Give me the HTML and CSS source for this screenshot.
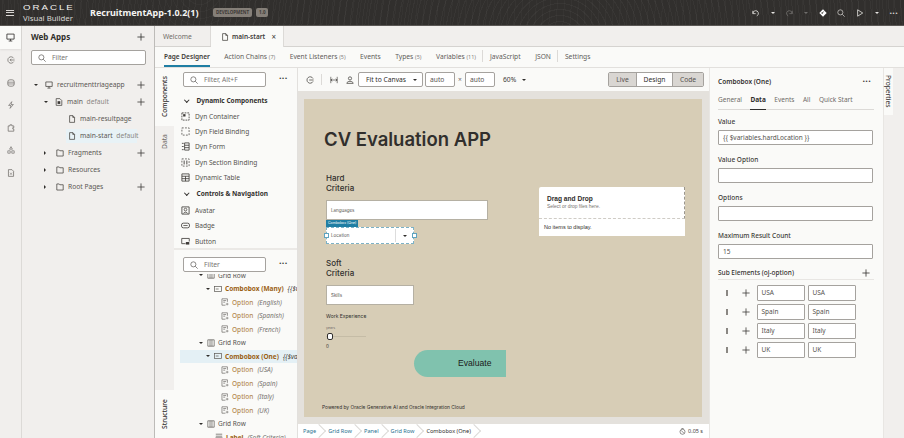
FILE: index.html
```html
<!DOCTYPE html>
<html lang="en">
<head>
	<link rel="stylesheet" href="styles.css">
	<meta charset="UTF-8">
	<title>RecruitmentApp - Visual Builder</title>
</head>
<body>

<svg class="iconDefs" width="0" height="0">
	<symbol id="i-plus" viewBox="0 0 10 10"><path d="M5 .5v9M.5 5h9" fill="none" stroke="currentColor" stroke-width="1"/></symbol>
	<symbol id="i-search" viewBox="0 0 10 10"><circle cx="4.2" cy="4.2" r="3.2" fill="none" stroke="currentColor" stroke-width=".8"/><path d="M6.6 6.6l3 3" stroke="currentColor" stroke-width=".8"/></symbol>
	<symbol id="i-screen" viewBox="0 0 10 10"><path d="M1 1.2h8v5.6H1zM5 6.8v2M3 8.9h4" fill="none" stroke="currentColor" stroke-width=".9"/></symbol>
	<symbol id="i-page" viewBox="0 0 10 10"><path d="M2 .8h4l2.2 2.2v6.2H2zM6 .8V3h2.2" fill="none" stroke="currentColor" stroke-width=".9"/></symbol>
	<symbol id="i-flow" viewBox="0 0 10 10"><path d="M8.5 3A4 4 0 1 0 8.5 7M3.5 5h6M5.500 3.5L4 5l1.5 1.5" fill="none" stroke="currentColor" stroke-width=".9"/></symbol>
	<symbol id="i-db" viewBox="0 0 10 10"><rect x="1" y="1" width="8" height="8" rx="2.6" fill="none" stroke="currentColor" stroke-width=".9"/><path d="M1 4h8M1 6.2h8" stroke="currentColor" stroke-width=".8"/></symbol>
	<symbol id="i-bolt" viewBox="0 0 10 10"><path d="M6 .8L2 5.6h3L3.8 9.2 8 4.4H5z" fill="none" stroke="currentColor" stroke-width=".8"/></symbol>
	<symbol id="i-puzzle" viewBox="0 0 10 10"><path d="M1.5 2.4h2.2V1h2.4v1.4h2.4v2.2H7.2v1.6h1.3v2.8h-7z" fill="none" stroke="currentColor" stroke-width=".9"/></symbol>
	<symbol id="i-tree" viewBox="0 0 10 10"><path d="M5 .8L6.8 4H3.2zM1 6h3v3H1zM6 6h3v3H6z" fill="none" stroke="currentColor" stroke-width=".8"/></symbol>
	<symbol id="i-doc" viewBox="0 0 10 10"><path d="M1.8 .8h4.4l2 2v6.4H1.8z" fill="none" stroke="currentColor" stroke-width=".9"/><path d="M3.8 4.6l2.4 2.600M6.2 4.6L3.8 7.2" stroke="currentColor" stroke-width=".7"/></symbol>
	<symbol id="i-folder" viewBox="0 0 10 10"><path d="M1 1.2h3l.8 1H9v6.6H1z" fill="none" stroke="currentColor" stroke-width=".9"/></symbol>
	<symbol id="i-flowpage" viewBox="0 0 10 10"><path d="M1.5 .8h4.6l2.4 2.4v6H1.5z" fill="none" stroke="currentColor" stroke-width=".9"/><rect x="3.2" y="4" width="3.4" height="3.4" fill="currentColor"/></symbol>
	<symbol id="i-combo" viewBox="0 0 10 10"><rect x=".6" y="2" width="8.8" height="6" fill="none" stroke="currentColor" stroke-width=".9"/><path d="M2.2 5h3.6" stroke="currentColor" stroke-width=".9"/></symbol>
	<symbol id="i-option" viewBox="0 0 10 10"><path d="M8 4.8V1H1.2v8h4.4M2.800 3.2h3.6M2.800 5.2h2.4" fill="none" stroke="currentColor" stroke-width=".8"/><path d="M6 7.6h3.4M7.7 6v3.2" stroke="currentColor" stroke-width=".7"/></symbol>
	<symbol id="i-grid" viewBox="0 0 10 10"><path d="M1 1h8v8H1zM3.8 1v8M6.2 1v8" fill="none" stroke="currentColor" stroke-width=".9"/></symbol>
	<symbol id="i-label" viewBox="0 0 10 10"><path d="M1 1.5h8M1 4h8" stroke="currentColor" stroke-width=".9"/><rect x="1" y="6" width="8" height="3" fill="none" stroke="currentColor" stroke-width=".8"/></symbol>
	<symbol id="i-dyn" viewBox="0 0 10 10"><path d="M1 1h8v8H1z" fill="none" stroke="currentColor" stroke-width=".9" stroke-dasharray="2 1"/><rect x="2.4" y="2.4" width="2.6" height="2.6" fill="currentColor"/></symbol>
	<symbol id="i-dynfield" viewBox="0 0 10 10"><path d="M1 1h8v8H1z" fill="none" stroke="currentColor" stroke-width=".8" stroke-dasharray="2 1.5"/></symbol>
	<symbol id="i-dynform" viewBox="0 0 10 10"><path d="M1 1.5h2M1 5h2M1 8.5h2M4 1h5v8H4zM4 3.6h5M4 6.3h5" fill="none" stroke="currentColor" stroke-width=".9"/></symbol>
	<symbol id="i-dynsection" viewBox="0 0 10 10"><path d="M1 1h8v8H1z" fill="none" stroke="currentColor" stroke-width=".8" stroke-dasharray="2 1.5"/><path d="M3.5 2.8v4.4M6.5 2.8v4.4" stroke="currentColor" stroke-width="1"/></symbol>
	<symbol id="i-table" viewBox="0 0 10 10"><path d="M1 1h8v8H1zM1 3.6h8M1 6.3h8M5 3.6V9" fill="none" stroke="currentColor" stroke-width=".9"/></symbol>
	<symbol id="i-avatar" viewBox="0 0 10 10"><path d="M1 1h8v8H1z" fill="none" stroke="currentColor" stroke-width=".9"/><circle cx="5" cy="4" r="1.5" fill="none" stroke="currentColor" stroke-width=".8"/><path d="M2.6 8.4c.4-2 4.4-2 4.8 0" fill="none" stroke="currentColor" stroke-width=".8"/></symbol>
	<symbol id="i-badge" viewBox="0 0 10 10"><rect x=".6" y="2.4" width="8.8" height="5.2" rx="2" fill="none" stroke="currentColor" stroke-width=".9"/><path d="M2.6 5h4.8" stroke="currentColor" stroke-width=".8"/></symbol>
	<symbol id="i-button" viewBox="0 0 10 10"><path d="M5 7.4H.8V1.6h8.4V5" fill="none" stroke="currentColor" stroke-width=".9"/><rect x="5.4" y="5.6" width="3.8" height="2.8" fill="currentColor"/></symbol>
	<symbol id="i-refresh" viewBox="0 0 10 10"><path d="M8.8 3.2A4 4 0 1 0 8.8 6.8M4 5h5.5" fill="none" stroke="currentColor" stroke-width=".9"/></symbol>
	<symbol id="i-width" viewBox="0 0 10 10"><path d="M1 1v8M9 1v8M1 5h8M2.8 3.4L1.2 5l1.6 1.6M7.2 3.4L8.8 5 7.2 6.6" fill="none" stroke="currentColor" stroke-width=".8"/></symbol>
	<symbol id="i-user" viewBox="0 0 10 10"><circle cx="5" cy="3" r="2" fill="none" stroke="currentColor" stroke-width=".9"/><path d="M1 9.2c.4-3.4 7.6-3.4 8 0z" fill="none" stroke="currentColor" stroke-width=".9"/></symbol>
	<symbol id="i-undo" viewBox="0 0 10 10"><path d="M1 2.2v3.6h3.6M1.2 5.6A3.4 3.4 0 1 1 6 8.6" fill="none" stroke="currentColor" stroke-width="1"/></symbol>
	<symbol id="i-redo" viewBox="0 0 10 10"><path d="M9 2.2v3.6H5.4M8.8 5.6A3.4 3.4 0 1 0 4 8.6" fill="none" stroke="currentColor" stroke-width="1"/></symbol>
	<symbol id="i-diamond" viewBox="0 0 10 10"><path d="M5 .4L9.6 5 5 9.6.4 5z" fill="currentColor"/><circle cx="4" cy="5" r="1" fill="#2f2d2b"/><path d="M4.4 4.6L6.4 3" stroke="#2f2d2b" stroke-width=".7"/></symbol>
	<symbol id="i-play" viewBox="0 0 10 10"><path d="M2 1l6.400 4L2 9z" fill="none" stroke="currentColor" stroke-width="1"/></symbol>
	<symbol id="i-timer" viewBox="0 0 10 10"><circle cx="5" cy="5.4" r="3.6" fill="none" stroke="currentColor" stroke-width=".8"/><path d="M3.4 .8h3.2M3 3.4l4 4" stroke="currentColor" stroke-width=".8"/></symbol>
</svg>

<div id="app">

<header class="topBar">
	<div class="burger"><span></span><span></span><span></span></div>
	<div class="brand">
		<div class="brandOracle">ORACLE</div>
		<div class="brandSub">Visual Builder</div>
	</div>
	<div class="appName">RecruitmentApp-1.0.2(1)</div>
	<span class="envPill">DEVELOPMENT</span>
	<span class="envPill envPillSmall">1.0</span>
	<div class="topActions">
		<svg class="ico8"><use href="#i-undo"/></svg><i class="caret caretLight"></i>
		<svg class="ico8 dim"><use href="#i-redo"/></svg><i class="caret caretLight dim"></i>
		<svg class="ico8 bright"><use href="#i-diamond"/></svg>
		<svg class="ico8"><use href="#i-search"/></svg>
		<svg class="ico8"><use href="#i-play"/></svg><i class="caret caretLight"></i>
		<span class="dots">···</span>
	</div>
</header>

<div class="mainRow">

	<nav class="rail">
		<div class="railItem railActive"><svg class="ico9"><use href="#i-screen"/></svg></div>
		<div class="railItem"><svg class="ico8"><use href="#i-flow"/></svg></div>
		<div class="railItem"><svg class="ico8"><use href="#i-db"/></svg></div>
		<div class="railItem"><svg class="ico8"><use href="#i-bolt"/></svg></div>
		<div class="railItem"><svg class="ico8"><use href="#i-puzzle"/></svg></div>
		<div class="railItem"><svg class="ico8"><use href="#i-tree"/></svg></div>
		<div class="railItem"><svg class="ico8"><use href="#i-doc"/></svg></div>
	</nav>

	<aside class="navPanel">
		<div class="navHead"><b>Web Apps</b><svg class="ico8"><use href="#i-plus"/></svg></div>
		<div class="filterBox navFilter"><svg class="ico8"><use href="#i-search"/></svg>Filter</div>
		<div class="navTree">
			<div class="navRow lv0"><i class="caret"></i><svg class="ico8"><use href="#i-screen"/></svg><span class="grow">recruitmenttriageapp</span><svg class="ico8"><use href="#i-plus"/></svg></div>
			<div class="navRow lv1"><i class="caret"></i><svg class="ico8"><use href="#i-flowpage"/></svg><span class="grow">main <em>default</em></span><svg class="ico8"><use href="#i-plus"/></svg></div>
			<div class="navRow lv2"><svg class="ico8"><use href="#i-page"/></svg><span class="grow">main-resultpage</span></div>
			<div class="navRow lv2 navSelected"><svg class="ico8"><use href="#i-page"/></svg><span class="grow">main-start <em>default</em></span></div>
			<div class="navRow lv1"><i class="caret caretRight"></i><svg class="ico8"><use href="#i-folder"/></svg><span class="grow">Fragments</span><svg class="ico8"><use href="#i-plus"/></svg></div>
			<div class="navRow lv1"><i class="caret caretRight"></i><svg class="ico8"><use href="#i-folder"/></svg><span class="grow">Resources</span></div>
			<div class="navRow lv1"><i class="caret caretRight"></i><svg class="ico8"><use href="#i-folder"/></svg><span class="grow">Root Pages</span><svg class="ico8"><use href="#i-plus"/></svg></div>
		</div>
	</aside>

	<section class="work">
		<div class="fileTabs">
			<div class="fileTab">Welcome</div>
			<div class="fileTab fileTabOn"><svg class="ico8"><use href="#i-page"/></svg><b>main-start</b><span class="close">×</span></div>
		</div>
		<div class="subTabs">
			<span class="subTab subTabOn">Page Designer</span>
			<span class="subTab">Action Chains <small>(7)</small></span>
			<span class="subTab">Event Listeners <small>(5)</small></span>
			<span class="subTab">Events</span>
			<span class="subTab">Types <small>(5)</small></span>
			<span class="subTab subTabSep">Variables <small>(11)</small></span>
			<span class="subTab">JavaScript</span>
			<span class="subTab subTabSep">JSON</span>
			<span class="subTab">Settings</span>
		</div>

		<div class="workBody">
			<div class="sideTabs">
				<div class="sideTab sideTabOn tabComponents">Components</div>
				<div class="sideTab tabData">Data</div>
				<div class="sideTab sideTabOn tabStructure">Structure</div>
			</div>

			<div class="paletteCol">
				<div class="palette">
					<div class="paletteHead"><div class="filterBox"><svg class="ico8"><use href="#i-search"/></svg>Filter, Alt+F</div><span class="dots">···</span></div>
					<div class="palGroup"><i class="chev"></i>Dynamic Components</div>
					<div class="palItem"><svg class="ico9"><use href="#i-dyn"/></svg>Dyn Container</div>
					<div class="palItem"><svg class="ico9"><use href="#i-dynfield"/></svg>Dyn Field Binding</div>
					<div class="palItem"><svg class="ico9"><use href="#i-dynform"/></svg>Dyn Form</div>
					<div class="palItem"><svg class="ico9"><use href="#i-dynsection"/></svg>Dyn Section Binding</div>
					<div class="palItem"><svg class="ico9"><use href="#i-table"/></svg>Dynamic Table</div>
					<div class="palGroup palGroupTwo"><i class="chev"></i>Controls &amp; Navigation</div>
					<div class="palItem"><svg class="ico9"><use href="#i-avatar"/></svg>Avatar</div>
					<div class="palItem"><svg class="ico9"><use href="#i-badge"/></svg>Badge</div>
					<div class="palItem"><svg class="ico9"><use href="#i-button"/></svg>Button</div>
				</div>
				<div class="structure">
					<div class="paletteHead"><div class="filterBox"><svg class="ico8"><use href="#i-search"/></svg>Filter</div><span class="dots">···</span></div>
					<div class="structTree">
						<div class="stRow st2"><i class="caret"></i><svg class="ico8"><use href="#i-grid"/></svg><span>Grid Row</span></div>
						<div class="stRow st3"><i class="caret"></i><svg class="ico8"><use href="#i-combo"/></svg><b>Combobox (Many)</b><em class="expr">{{$variables.hardLanguages}}</em></div>
						<div class="stRow st4"><svg class="ico8"><use href="#i-option"/></svg><u>Option</u><em>(English)</em></div>
						<div class="stRow st4"><svg class="ico8"><use href="#i-option"/></svg><u>Option</u><em>(Spanish)</em></div>
						<div class="stRow st4"><svg class="ico8"><use href="#i-option"/></svg><u>Option</u><em>(French)</em></div>
						<div class="stRow st2"><i class="caret"></i><svg class="ico8"><use href="#i-grid"/></svg><span>Grid Row</span></div>
						<div class="stRow st3 stSelected"><i class="caret"></i><svg class="ico8"><use href="#i-combo"/></svg><b>Combobox (One)</b><em class="expr">{{$variables.hardLocation}}</em></div>
						<div class="stRow st4"><svg class="ico8"><use href="#i-option"/></svg><u>Option</u><em>(USA)</em></div>
						<div class="stRow st4"><svg class="ico8"><use href="#i-option"/></svg><u>Option</u><em>(Spain)</em></div>
						<div class="stRow st4"><svg class="ico8"><use href="#i-option"/></svg><u>Option</u><em>(Italy)</em></div>
						<div class="stRow st4"><svg class="ico8"><use href="#i-option"/></svg><u>Option</u><em>(UK)</em></div>
						<div class="stRow st2"><i class="caret"></i><svg class="ico8"><use href="#i-grid"/></svg><span>Grid Row</span></div>
						<div class="stRow st3 stLeaf"><svg class="ico8"><use href="#i-label"/></svg><b>Label</b><em>(Soft Criteria)</em></div>
					</div>
				</div>
			</div>

			<div class="centerCol">
				<div class="toolBar">
					<svg class="ico8"><use href="#i-refresh"/></svg>
					<span class="toolSep"></span>
					<svg class="ico8"><use href="#i-width"/></svg>
					<svg class="ico8"><use href="#i-user"/></svg>
					<div class="toolBtn fitBtn">Fit to Canvas<i class="caret"></i></div>
					<div class="toolBtn sizeBtn">auto</div>
					<span class="times">×</span>
					<div class="toolBtn sizeBtn">auto</div>
					<div class="zoomBox">60%<i class="caret"></i></div>
					<div class="modeGroup">
						<span class="modeBtn modeLive">Live</span>
						<span class="modeBtn modeOn">Design</span>
						<span class="modeBtn modeCode">Code</span>
					</div>
				</div>

				<div class="canvas">
					<div class="page">
						<h1 class="pageTitle">CV Evaluation APP</h1>
						<div class="pageGrid">
							<div class="leftCol">
								<h2 class="critTitle">Hard<br>Criteria</h2>
								<div class="field fieldWide">Languages</div>
								<div class="comboWrap">
									<span class="comboTag">Combobox (One)</span>
									<div class="field fieldCombo">Location<span class="comboArrow"><i class="caret"></i></span></div>
									<span class="handle handleL"></span>
									<span class="handle handleR"></span>
								</div>
								<h2 class="critTitle softTitle">Soft<br>Criteria</h2>
								<div class="field fieldSkills">Skills</div>
								<div class="wxLabel">Work Experience</div>
								<div class="wxYears">years</div>
								<div class="slider"><span class="sliderThumb"></span></div>
								<div class="wxValue">0</div>
							</div>
							<div class="dropCard">
								<div class="dropZone">
									<b>Drag and Drop</b>
									<span>Select or drop files here.</span>
								</div>
								<div class="dropList">No items to display.</div>
							</div>
						</div>
						<div class="evalBtn">Evaluate</div>
						<div class="pageFooter">Powered by Oracle Generative AI and Oracle Integration Cloud</div>
					</div>
				</div>

				<div class="crumbs">
					<span class="crumb">Page</span>
					<span class="crumb">Grid Row</span>
					<span class="crumb">Panel</span>
					<span class="crumb">Grid Row</span>
					<span class="crumb crumbOn">Combobox (One)</span>
					<span class="timer"><svg class="ico7"><use href="#i-timer"/></svg>0.05 s</span>
				</div>
			</div>

			<div class="props">
				<div class="propHead"><b>Combobox (One)</b><span class="dots">···</span></div>
				<div class="propTabs">
					<span>General</span><span class="propTabOn">Data</span><span>Events</span><span>All</span><span>Quick Start</span>
				</div>
				<label class="propLabel">Value</label>
				<div class="propInput">{{ $variables.hardLocation }}</div>
				<label class="propLabel">Value Option</label>
				<div class="propInput"></div>
				<label class="propLabel">Options</label>
				<div class="propInput"></div>
				<label class="propLabel">Maximum Result Count</label>
				<div class="propInput">15</div>
				<div class="subHead"><b>Sub Elements (oj-option)</b><svg class="ico8"><use href="#i-plus"/></svg></div>
				<div class="subRow"><span class="grip"></span><svg class="ico8"><use href="#i-plus"/></svg><div class="subInput">USA</div><div class="subInput">USA</div></div>
				<div class="subRow"><span class="grip"></span><svg class="ico8"><use href="#i-plus"/></svg><div class="subInput">Spain</div><div class="subInput">Spain</div></div>
				<div class="subRow"><span class="grip"></span><svg class="ico8"><use href="#i-plus"/></svg><div class="subInput">Italy</div><div class="subInput">Italy</div></div>
				<div class="subRow"><span class="grip"></span><svg class="ico8"><use href="#i-plus"/></svg><div class="subInput">UK</div><div class="subInput">UK</div></div>
			</div>

			<div class="propSide"><div class="propSideTab">Properties</div></div>
		</div>
	</section>
</div>
</div>

</body>
</html>
```

FILE: styles.css
```css
* {
	box-sizing: border-box;
}

html, body {
	margin: 0;
	height: 100%;
	overflow: hidden;
}

body {
	font-family: "Noto Sans", sans-serif;
	font-size: 6.7px;
	color: #3d3a37;
	background-color: #fafaf8;
}

.iconDefs {
	display: block;
	height: 0;
	position: absolute;
}

#app {
	width: 904px;
	height: 438px;
	display: flex;
	flex-direction: column;
}

.ico7 { width: 7px; height: 7px; flex: none; }
.ico8 { width: 8px; height: 8px; flex: none; }
.ico9 { width: 9px; height: 9px; flex: none; }

.caret {
	display: inline-block;
	flex: none;
	width: 0;
	height: 0;
	border-left: 2.5px solid transparent;
	border-right: 2.5px solid transparent;
	border-top: 2.5px solid #2f2d2b;
}

.caretRight {
	width: 5px;
	border-top: 2.5px solid transparent;
	border-bottom: 2.5px solid transparent;
	border-left: 2.5px solid #2f2d2b;
	border-right: none;
}

.caretLight {
	border-top-color: #e6e4e1;
}

.dots {
	font-weight: 700;
	font-size: 9px;
	line-height: 8px;
	letter-spacing: .3px;
	color: #3d3a37;
}

/* top bar */
.topBar {
	height: 26px;
	flex: none;
	display: flex;
	align-items: center;
	color: #f5f4f2;
	background-color: #312f2d;
	background-image:
		repeating-radial-gradient(circle at 560px 40px, rgba(255,255,255,.035) 0 1px, transparent 1px 6px),
		repeating-radial-gradient(circle at 200px -10px, rgba(255,255,255,.025) 0 1px, transparent 1px 7px);
	border-bottom: 1px solid #5a5754;
}

.burger {
	width: 8px;
	margin-left: 6px;
	display: flex;
	flex-direction: column;
	gap: 1.5px;
}

.burger span {
	height: 1px;
	background-color: #d9d7d4;
}

.brand {
	margin-left: 9px;
	width: 67px;
}

.brandOracle {
	font-family: "Liberation Sans", sans-serif;
	font-size: 8px;
	line-height: 9px;
	letter-spacing: 1.7px;
	transform: scaleX(1.2);
	transform-origin: left;
}

.brandSub {
	margin-top: 1px;
	font-size: 7.8px;
	line-height: 10px;
	color: #d9d7d4;
}

.appName {
	font-size: 9px;
	font-weight: 700;
	width: 123px;
	white-space: nowrap;
}

.envPill {
	height: 9px;
	line-height: 9px;
	padding: 0 3px;
	font-size: 4.5px;
	font-weight: 700;
	color: #3d3a37;
	background-color: #857f78;
	border-radius: 2px;
}

.envPillSmall {
	margin-left: 4px;
}

.topActions {
	margin-left: auto;
	margin-right: 6px;
	display: flex;
	align-items: center;
	width: 146px;
	justify-content: space-between;
	color: #e6e4e1;
}

.topActions .dots {
	color: #d9d7d4;
}

.dim { opacity: .35; }
.bright { color: #fff; }

/* body */
.mainRow {
	flex: 1;
	min-height: 0;
	display: flex;
}

.rail {
	width: 22px;
	flex: none;
	background-color: #f1efed;
	border-right: 1px solid #dcdad7;
	color: #6b6864;
}

.railItem {
	height: 22.5px;
	display: flex;
	align-items: center;
	justify-content: center;
}

.railActive {
	color: #2f2d2b;
	height: 23px;
	background-color: #fafaf8;
	box-shadow: 0 1px 2px rgba(0,0,0,.08);
}

.navPanel {
	width: 133px;
	flex: none;
	font-size: 6.7px;
	background-color: #f1efed;
	border-right: 1px solid #bdbbb8;
}

.navHead {
	height: 21px;
	padding: 0 9px;
	display: flex;
	align-items: center;
	justify-content: space-between;
	font-size: 8px;
	color: #2f2d2b;
}

.filterBox {
	height: 15px;
	display: flex;
	align-items: center;
	gap: 6px;
	padding-left: 6px;
	color: #77736f;
	background-color: #fff;
	border: 1px solid #a5a29e;
	border-radius: 2px;
}

.filterBox .ico8 {
	color: #4a4744;
}

.navFilter {
	margin: 3px 9px 0 9px;
	width: 115px;
}

.navTree {
	margin-top: 11px;
}

.navRow {
	height: 17px;
	display: flex;
	align-items: center;
	gap: 4px;
	padding-right: 9px;
	color: #5a5753;
}

.navRow .caret {
	margin-right: 3px;
}

.navRow .ico8 {
	color: #3d3a37;
}

.navRow em {
	font-style: normal;
	color: #8a8783;
	margin-left: 2px;
}

.grow {
	flex: 1;
	white-space: nowrap;
	overflow: hidden;
}

.lv0 { padding-left: 12px; }
.lv1 { padding-left: 22px; }
.lv2 { padding-left: 46px; }

.navSelected {
	background: linear-gradient(#e8f2f6, #e8f2f6) no-repeat 44px center / 71px 14px;
}

.work {
	flex: 1;
	min-width: 0;
	display: flex;
	flex-direction: column;
}

.fileTabs {
	height: 21px;
	flex: none;
	display: flex;
	background-color: #f1efed;
	border-bottom: 1px solid #d5d3d0;
}

.fileTab {
	width: 56px;
	padding-left: 8px;
	display: flex;
	align-items: center;
	color: #6f6c68;
	border-right: 1px solid #dcdad7;
	white-space: nowrap;
}

.fileTabOn {
	width: 73px;
	height: 21px;
	gap: 3px;
	padding-left: 10px;
	color: #3d3a37;
	background-color: #fafaf8;
}

.fileTabOn b {
	font-size: 6.5px;
	font-weight: 600;
}

.close {
	margin-left: auto;
	margin-right: 7px;
	font-size: 8px;
}

.subTabs {
	height: 21px;
	flex: none;
	display: flex;
	align-items: flex-start;
	padding-left: 9px;
	background-color: #fafaf8;
	border-bottom: 1px solid #e2e0dd;
}

.subTab {
	position: relative;
	height: 20px;
	line-height: 19px;
	margin-right: 14.5px;
	color: #5f5c58;
	white-space: nowrap;
}

.subTab small {
	font-size: 5.5px;
	color: #85827e;
}

.subTabOn {
	font-size: 6.5px;
	font-weight: 600;
	color: #3d3a37;
	border-bottom: 2px solid #1f7ea3;
}

.subTabSep {
	padding-right: 7px;
	margin-right: 7px;
}

.subTabSep::after {
	content: "";
	position: absolute;
	right: 0;
	top: 3px;
	height: 12px;
	border-right: 1px solid #dcdad7;
}

.workBody {
	flex: 1;
	min-height: 0;
	display: flex;
}

.sideTabs {
	width: 19px;
	flex: none;
	display: flex;
	flex-direction: column;
	background-color: #f1efed;
}

.sideTab {
	writing-mode: vertical-rl;
	transform: rotate(180deg);
	display: flex;
	align-items: center;
	justify-content: center;
	color: #6f6c68;
}

.sideTabOn {
	color: #2f2d2b;
	font-weight: 500;
	background-color: #fafaf8;
}

.tabComponents { height: 58px; }
.tabData { height: 32px; }
.tabStructure {
	height: 48px;
	margin-top: auto;
}

.paletteCol {
	width: 124px;
	flex: none;
	display: flex;
	flex-direction: column;
	background-color: #fafaf8;
	border-right: 1px solid #e2e0dd;
}

.palette {
	height: 182px;
	flex: none;
	overflow: hidden;
	font-size: 6.6px;
	border-bottom: 2px solid #ebe9e6;
}

.paletteHead {
	height: 22px;
	padding: 4px 0 0 9px;
	display: flex;
	align-items: flex-start;
	gap: 13px;
}

.paletteHead .filterBox {
	width: 83px;
}

.paletteHead .dots {
	margin-top: 2px;
}

.palGroup {
	height: 16px;
	margin-top: 2.5px;
	display: flex;
	align-items: center;
	padding-left: 10px;
	font-size: 6.5px;
	font-weight: 700;
	color: #33312f;
}

.palGroupTwo {
	margin-top: 0;
	height: 18px;
}

.chev {
	width: 3.5px;
	height: 3.5px;
	margin: -2px 8px 0 1px;
	border-right: 1px solid #33312f;
	border-bottom: 1px solid #33312f;
	transform: rotate(45deg);
}

.palItem {
	height: 15.3px;
	display: flex;
	align-items: center;
	gap: 5px;
	padding-left: 7px;
	color: #55524e;
}

.palItem svg {
	color: #3d3a37;
}

.structure {
	flex: 1;
	min-height: 0;
	overflow: hidden;
}

.structure .paletteHead {
	height: 24px;
	padding-top: 7px;
}

.structTree {
	height: 164px;
	overflow: hidden;
	white-space: nowrap;
	font-size: 6.5px;
}

.stRow {
	height: 13.5px;
	display: flex;
	align-items: center;
	gap: 3px;
	color: #55524e;
}

.stRow:first-child {
	margin-top: -5.5px;
}

.stRow .caret {
	margin-right: 1px;
}

.stRow b {
	color: #9a5f14;
	font-weight: 700;
}

.stRow u {
	text-decoration: none;
	color: #b58a52;
	font-weight: 500;
}

.stRow em {
	color: #77736f;
	margin-left: 1px;
}

.stRow .expr {
	color: #3d3a37;
}

.stRow .ico8 {
	color: #5f5c58;
}

.st2 { padding-left: 25px; }
.st3 { padding-left: 32px; }
.st4 { padding-left: 47px; }

.stLeaf {
	padding-left: 41px;
}

.stSelected {
	background-color: #e4f0f5;
	margin-left: 6px;
	padding-left: 26px;
}

/* canvas column */
.centerCol {
	width: 411px;
	flex: none;
	display: flex;
	flex-direction: column;
}

.toolBar {
	height: 23px;
	flex: none;
	display: flex;
	align-items: center;
	padding-left: 8px;
	color: #3d3a37;
	background-color: #fafaf8;
}

.toolSep {
	height: 11px;
	margin: 0 8px 0 7px;
	border-right: 1px solid #dcdad7;
}

.toolBar .ico8 + .ico8 {
	margin-left: 8px;
}

.toolBtn {
	height: 15px;
	display: flex;
	align-items: center;
	background-color: #fff;
	border: 1px solid #a5a29e;
	border-radius: 2px;
}

.fitBtn {
	width: 65px;
	margin-left: 4px;
	padding-left: 7px;
	gap: 7px;
	color: #2f2d2b;
}

.sizeBtn {
	width: 30px;
	margin-left: 2px;
	padding-left: 4px;
	color: #55524e;
}

.times {
	width: 6px;
	margin-left: 2px;
	text-align: center;
	color: #6f6c68;
}

.zoomBox {
	display: flex;
	align-items: center;
	gap: 6px;
	margin-left: 8px;
	color: #3d3a37;
}

.modeGroup {
	margin-left: auto;
	margin-right: 5px;
	display: flex;
	height: 15px;
	border: 1px solid #a5a29e;
	border-radius: 2px;
	overflow: hidden;
}

.modeBtn {
	line-height: 13px;
	text-align: center;
	color: #55524e;
	background-color: #d9d6d2;
}

.modeLive { width: 27px; }
.modeCode { width: 30px; }

.modeOn {
	width: 37px;
	color: #2f2d2b;
	background-color: #fff;
	border-left: 1px solid #a5a29e;
	border-right: 1px solid #a5a29e;
}

.canvas {
	flex: 1;
	min-height: 0;
	padding: 8px 7px 7px 6px;
	background-color: #e4e1dc;
}

.page {
	height: 100%;
	padding-left: 18px;
	font-family: Inter, sans-serif;
	color: #312f2d;
	background-color: #d7cdb6;
	overflow: hidden;
}

.pageTitle {
	margin: 28px 0 0 2px;
	font-size: 18.5px;
	line-height: 24px;
	font-weight: 600;
}

.pageGrid {
	display: grid;
	grid-template-columns: 162px 146px;
	column-gap: 51px;
	margin-left: 4px;
}

.leftCol {
	min-width: 0;
}

.critTitle {
	margin: 22px 0 0 0;
	font-size: 8px;
	line-height: 10px;
	font-weight: 500;
}

.softTitle {
	margin-top: 14px;
}

.field {
	display: flex;
	align-items: center;
	padding-left: 4px;
	font-size: 4.5px;
	color: #55524e;
	background-color: #fff;
	border: 1px solid #b5b0a3;
}

.fieldWide {
	height: 20px;
	margin-top: 7px;
}

.comboWrap {
	position: relative;
	width: 88px;
	margin-top: 7px;
}

.comboTag {
	position: absolute;
	left: 0;
	top: -7px;
	height: 7px;
	padding: 0 2px;
	line-height: 7px;
	font-size: 3.5px;
	color: #fff;
	background-color: #1f7ea3;
	white-space: nowrap;
}

.fieldCombo {
	height: 17px;
	border: 1px dashed #7db2c6;
}

.comboArrow {
	margin-left: auto;
	width: 18px;
	height: 13px;
	display: flex;
	align-items: center;
	justify-content: center;
	border-left: 1px solid #ddd;
}

.handle {
	position: absolute;
	top: 6px;
	width: 5px;
	height: 5px;
	background-color: #fff;
	border: 1px solid #5fa4bf;
}

.handleL { left: -2.5px; }
.handleR { right: -2.5px; }

.fieldSkills {
	width: 88px;
	height: 20px;
	margin-top: 7px;
}

.wxLabel {
	margin-top: 7.5px;
	font-size: 5px;
	line-height: 6px;
}

.wxYears {
	margin-top: 7.5px;
	font-size: 3.5px;
	line-height: 5px;
	color: #6f6c68;
}

.slider {
	position: relative;
	width: 40px;
	height: 1px;
	margin-top: 5px;
	background-color: #c5bca6;
}

.sliderThumb {
	position: absolute;
	left: 1px;
	top: -3px;
	width: 6px;
	height: 7px;
	background-color: #fff;
	border: 1px solid #312f2d;
	border-radius: 2px;
}

.wxValue {
	margin-top: 7px;
	font-size: 4.5px;
	line-height: 6px;
}

.dropCard {
	align-self: start;
	margin-top: 36px;
	background-color: #fff;
	border-radius: 2px 2px 0 0;
	font-family: "Liberation Sans", sans-serif;
}

.dropZone {
	height: 32px;
	padding: 8px 0 0 8px;
	display: flex;
	flex-direction: column;
	border-bottom: 1px dashed #cfccc6;
	border-right: 1px dashed #9a968e;
}

.dropZone b {
	font-size: 6.6px;
	line-height: 8px;
	color: #2f2d2b;
}

.dropZone span {
	margin-top: 1px;
	font-size: 4.9px;
	line-height: 6px;
	color: #77736f;
}

.dropList {
	height: 17px;
	padding: 4px 0 0 5px;
	font-size: 5.5px;
	line-height: 8px;
	color: #2f2d2b;
}

.evalBtn {
	width: 92px;
	height: 27px;
	margin: 0 0 0 92px;
	padding-left: 44px;
	line-height: 27px;
	font-family: "Liberation Sans", sans-serif;
	font-size: 8.6px;
	color: #1a1a1a;
	background-color: #80c2ae;
	border-radius: 14px 0 0 14px;
}

.pageFooter {
	margin-top: 27px;
	font-size: 4.85px;
	line-height: 7px;
	white-space: nowrap;
}

.crumbs {
	height: 14px;
	flex: none;
	display: flex;
	align-items: center;
	padding-left: 5px;
	background-color: #fff;
	font-size: 5.6px;
	color: #1f6f90;
	overflow: hidden;
}

.crumb {
	margin-right: 12px;
	position: relative;
	white-space: nowrap;
}

.crumb::after {
	content: "";
	position: absolute;
	right: -8px;
	top: -1px;
	width: 9px;
	height: 9px;
	border-right: 1px solid #dcdad7;
	border-top: 1px solid #dcdad7;
	transform: rotate(45deg);
}

.crumbOn {
	color: #2f2d2b;
}

.timer {
	margin-left: auto;
	margin-right: 6px;
	display: flex;
	align-items: center;
	gap: 2px;
	font-size: 5.5px;
	color: #3d3a37;
}

/* properties */
.props {
	width: 175px;
	flex: none;
	padding: 0 9px 0 8px;
	font-size: 6.5px;
	background-color: #fafaf8;
	border-left: 1px solid #e8e6e3;
	border-right: 1px solid #e8e6e3;
}

.propHead {
	height: 24px;
	display: flex;
	align-items: center;
	justify-content: space-between;
	padding: 2px 3px 0 0;
	color: #33312f;
}

.propHead b {
	font-weight: 600;
}

.propTabs {
	height: 18px;
	display: flex;
	gap: 8.5px;
	padding-top: 3px;
	color: #6f6c68;
	border-bottom: 1px solid #dcdad7;
}

.propTabOn {
	height: 15px;
	color: #2f2d2b;
	font-weight: 700;
	border-bottom: 1px solid #2f2d2b;
}

.propLabel {
	display: block;
	height: 10px;
	line-height: 10px;
	font-weight: 500;
	color: #3d3a37;
}

.propLabel:first-of-type {
	margin-top: 7px;
}

.propInput {
	width: 155px;
	height: 15px;
	margin: 3px 0 10px 0;
	line-height: 13px;
	padding-left: 4px;
	color: #55524e;
	background-color: #fff;
	border: 1px solid #a5a29e;
	border-radius: 1px;
}

.subHead {
	height: 14px;
	margin: -3px 0 3.5px 0;
	padding-right: 4px;
	display: flex;
	align-items: center;
	justify-content: space-between;
	border-bottom: 1px solid #e8e6e3;
	color: #33312f;
}

.subHead b {
	font-weight: 500;
}

.subRow {
	height: 19px;
	display: flex;
	align-items: center;
	padding-left: 8px;
}

.grip {
	width: 2px;
	height: 6px;
	background-color: #8a8783;
}

.subRow .ico8 {
	margin: 0 7px 0 13.5px;
	color: #3d3a37;
}

.subInput {
	width: 48px;
	height: 16px;
	margin-right: 3px;
	padding-left: 4px;
	line-height: 14px;
	color: #55524e;
	background-color: #fff;
	border: 1px solid #a5a29e;
	border-radius: 1px;
}

.propSide {
	flex: 1;
	background-color: #f1efed;
}

.propSideTab {
	writing-mode: vertical-rl;
	height: 47px;
	display: flex;
	align-items: center;
	justify-content: center;
	color: #2f2d2b;
	background-color: #fafaf8;
}
```
